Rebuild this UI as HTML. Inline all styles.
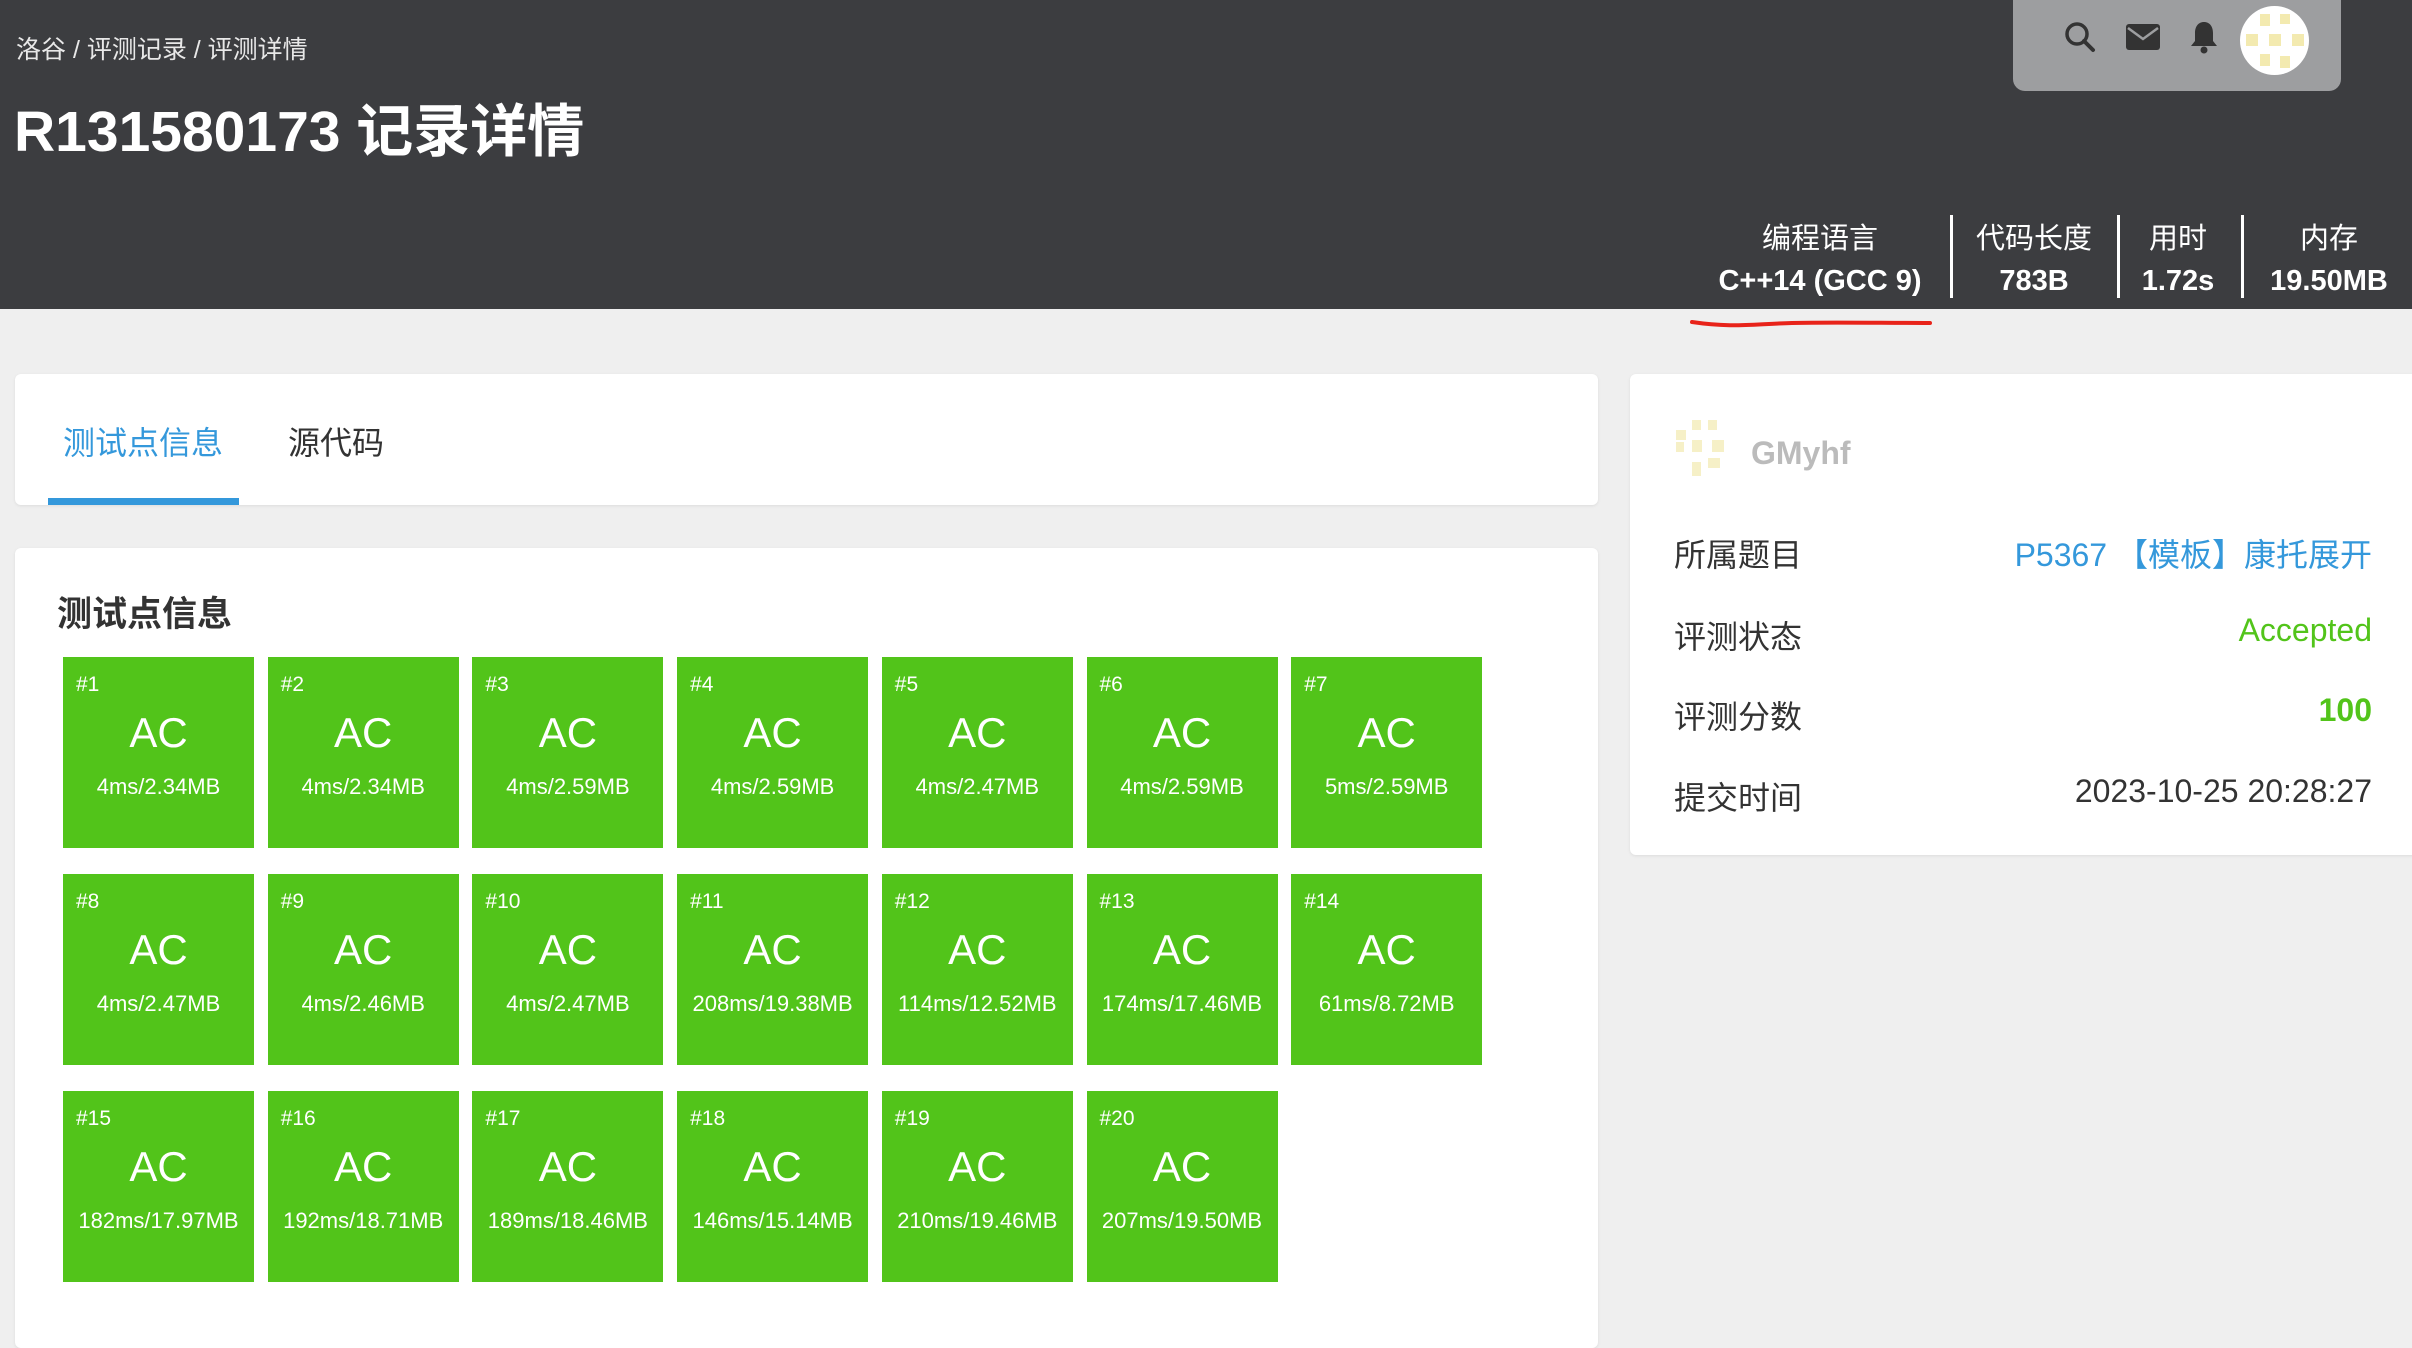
<!DOCTYPE html>
<html><head><meta charset="utf-8"><style>
*{margin:0;padding:0;box-sizing:border-box}
body{width:2412px;height:1318px;overflow:hidden;background:#efefef;font-family:"Liberation Sans","Noto Sans CJK SC",sans-serif;position:relative}
.hdr{position:absolute;left:0;top:0;width:2412px;height:309px;background:#3c3d40;color:#fff}
.ab{position:absolute}
.crumb{left:16px;top:30px;font-size:25px;color:#e8e8e8}
.title{left:14px;top:86px;font-size:57px;font-weight:bold}
.icons{left:2013px;top:0;width:328px;height:91px;background:#9d9ea0;border-radius:0 0 12px 12px}
.stat{top:218px;text-align:center;font-size:29px;transform:translateX(-50%);white-space:nowrap;line-height:42px}
.stat b{display:block}
.div{top:215px;width:3px;height:83px;background:#fff}
.card{background:#fff;border-radius:6px;box-shadow:0 1px 3px rgba(0,0,0,.08)}
.tile{position:absolute;width:191px;height:191px;background:#52c41a;color:#fff}
.tile .n{position:absolute;left:13px;top:16px;font-size:21px}
.tile .a{position:absolute;left:0;right:0;top:52px;text-align:center;font-size:42px}
.tile .m{position:absolute;left:0;right:0;top:117px;text-align:center;font-size:22px}
.row{position:absolute;left:1674px;width:698px;font-size:32px;color:#333;display:flex;justify-content:space-between}
</style></head><body>
<div class="hdr">
<div class="ab crumb">洛谷 / 评测记录 / 评测详情</div>
<div class="ab title">R131580173 记录详情</div>
<div class="ab icons">
<svg class="ab" style="left:50px;top:20px" width="34" height="34" viewBox="0 0 34 34"><circle cx="14" cy="14" r="10" fill="none" stroke="#333" stroke-width="3.5"/><path d="M21 21l9 9" stroke="#333" stroke-width="4" stroke-linecap="round"/></svg>
<svg class="ab" style="left:113px;top:24px" width="34" height="26" viewBox="0 0 34 26"><rect width="34" height="26" rx="3" fill="#333"/><path d="M2 4l15 11 15-11" fill="none" stroke="#9d9ea0" stroke-width="2.5"/></svg>
<svg class="ab" style="left:176px;top:20px" width="30" height="34" viewBox="0 0 30 34"><path d="M15 2c-6 0-9 5-9 11v8l-4 5h26l-4-5v-8c0-6-3-11-9-11z" fill="#333"/><circle cx="15" cy="30" r="3.5" fill="#333"/></svg>
<div class="ab" style="left:227px;top:6px;width:69px;height:69px;border-radius:50%;background:#fff;overflow:hidden">
<div class="ab" style="left:20px;top:8px;width:10px;height:12px;background:#f3eab0"></div><div class="ab" style="left:40px;top:8px;width:10px;height:10px;background:#f3eab0"></div>
<div class="ab" style="left:6px;top:28px;width:12px;height:12px;background:#f3eab0"></div><div class="ab" style="left:29px;top:28px;width:12px;height:12px;background:#f3eab0"></div><div class="ab" style="left:52px;top:28px;width:12px;height:12px;background:#f3eab0"></div>
<div class="ab" style="left:20px;top:48px;width:10px;height:12px;background:#f3eab0"></div><div class="ab" style="left:40px;top:50px;width:10px;height:12px;background:#f3eab0"></div>
</div>
</div>
<div class="ab stat" style="left:1820px">编程语言<b>C++14 (GCC 9)</b></div>
<div class="ab div" style="left:1950px"></div>
<div class="ab stat" style="left:2034px">代码长度<b>783B</b></div>
<div class="ab div" style="left:2117px"></div>
<div class="ab stat" style="left:2178px">用时<b>1.72s</b></div>
<div class="ab div" style="left:2241px"></div>
<div class="ab stat" style="left:2329px">内存<b>19.50MB</b></div>
</div>
<svg class="ab" style="left:1690px;top:316px" width="242" height="14"><path d="M2 6c40 6 60 2 100 1s90 0 138 0" fill="none" stroke="#e8231a" stroke-width="4" stroke-linecap="round"/></svg>

<div class="ab card" style="left:15px;top:374px;width:1583px;height:131px">
<div class="ab" style="left:48px;top:44px;font-size:32px;color:#3498db">测试点信息</div>
<div class="ab" style="left:273px;top:44px;font-size:32px;color:#333">源代码</div>
<div class="ab" style="left:33px;bottom:0;width:191px;height:7px;background:#3498db"></div>
</div>

<div class="ab card" style="left:15px;top:548px;width:1583px;height:800px">
<div class="ab" style="left:42px;top:38px;font-size:35px;font-weight:bold;color:#333">测试点信息</div>
</div>

<div id="tiles"></div>
<div class="ab card" style="left:1630px;top:374px;width:800px;height:481px"></div>
<div class="ab" style="left:1674px;top:420px;width:60px;height:60px;opacity:.7">
<div class="ab" style="left:18px;top:0;width:9px;height:10px;background:#f3eab0"></div><div class="ab" style="left:34px;top:0;width:9px;height:10px;background:#f3eab0"></div>
<div class="ab" style="left:2px;top:10px;width:10px;height:10px;background:#f3eab0"></div><div class="ab" style="left:18px;top:20px;width:10px;height:12px;background:#f3eab0"></div><div class="ab" style="left:38px;top:20px;width:12px;height:12px;background:#f3eab0"></div>
<div class="ab" style="left:2px;top:22px;width:8px;height:10px;background:#f3eab0"></div><div class="ab" style="left:18px;top:42px;width:9px;height:14px;background:#f3eab0"></div><div class="ab" style="left:34px;top:38px;width:12px;height:10px;background:#f3eab0"></div>
</div>
<div class="ab" style="left:1751px;top:435px;font-size:32px;font-weight:bold;color:#bbb">GMyhf</div>
<div class="row" style="top:530px"><span>所属题目</span><span style="color:#3498db">P5367 【模板】康托展开</span></div>
<div class="row" style="top:612px"><span>评测状态</span><span style="color:#52c41a">Accepted</span></div>
<div class="row" style="top:692px"><span>评测分数</span><span style="color:#52c41a;font-weight:bold">100</span></div>
<div class="row" style="top:773px"><span>提交时间</span><span>2023-10-25 20:28:27</span></div>

<script>
var m=["4ms/2.34MB","4ms/2.34MB","4ms/2.59MB","4ms/2.59MB","4ms/2.47MB","4ms/2.59MB","5ms/2.59MB","4ms/2.47MB","4ms/2.46MB","4ms/2.47MB","208ms/19.38MB","114ms/12.52MB","174ms/17.46MB","61ms/8.72MB","182ms/17.97MB","192ms/18.71MB","189ms/18.46MB","146ms/15.14MB","210ms/19.46MB","207ms/19.50MB"];
var h="";for(var i=0;i<20;i++){var c=i%7,r=Math.floor(i/7);h+='<div class="tile" style="left:'+(63+c*204.7)+'px;top:'+(657+r*217)+'px"><div class="n">#'+(i+1)+'</div><div class="a">AC</div><div class="m">'+m[i]+'</div></div>';}
document.getElementById("tiles").innerHTML=h;
</script>
</body></html>
